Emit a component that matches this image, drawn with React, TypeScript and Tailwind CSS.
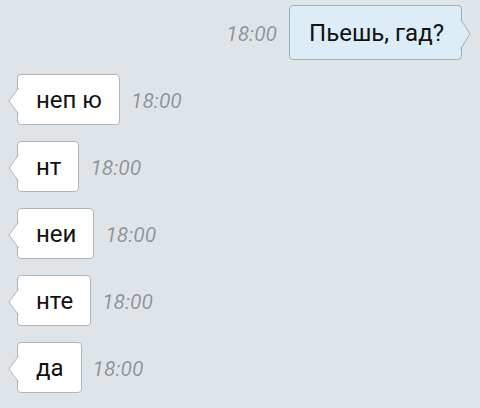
const incoming = ['неп ю', 'нт', 'неи', 'нте', 'да'];

const Time = () => (
  <span
    className="text-[21px] italic text-[#8c949b] leading-none"
    style={{ fontFamily: 'Roboto, "Liberation Sans", sans-serif', textShadow: '0 0 1px #fff' }}
  >
    18:00
  </span>
);

const TailLeft = () => (
  <svg className="absolute left-[-10px] top-[13px]" width="11" height="26" viewBox="0 0 11 26">
    <path d="M11 0 L1 13 L11 26 Z" fill="#ffffff" />
    <path d="M10.5 0 L1 13 L10.5 26" fill="none" stroke="#aeb6bd" strokeWidth="1" />
  </svg>
);

const TailRight = () => (
  <svg className="absolute right-[-10px] top-[13px]" width="11" height="30" viewBox="0 0 11 30">
    <path d="M0 0 L10 15 L0 30 Z" fill="#dcedf7" />
    <path d="M0.5 0 L10 15 L0.5 30" fill="none" stroke="#a3afb8" strokeWidth="1" />
  </svg>
);

export default function App() {
  return (
    <div
      className="w-[480px] h-[408px] bg-[#dfe4e8] overflow-hidden pt-[5px]"
      style={{ fontFamily: 'Roboto, "Liberation Sans", sans-serif' }}
    >
      <div className="flex justify-end items-baseline gap-[12px] pr-[18px]">
        <Time />
        <div className="relative bg-[#dcedf7] border border-[#a3afb8] rounded-[4px] pl-[19px] pr-[17px] pt-[14px] pb-[13px] text-[24px] leading-[26px] text-[#111]">
          Пьешь, гад?
          <TailRight />
        </div>
      </div>
      <div className="flex flex-col gap-[16px] pl-[17px] mt-[14px]">
        {incoming.map((t) => (
          <div key={t} className="flex items-baseline gap-[11px]">
            <div className="relative bg-white border border-[#aeb6bd] rounded-[4px] pl-[18px] pr-[17px] pt-[12px] pb-[11px] text-[24px] leading-[26px] text-[#111]">
              {t}
              <TailLeft />
            </div>
            <Time />
          </div>
        ))}
      </div>
    </div>
  );
}
